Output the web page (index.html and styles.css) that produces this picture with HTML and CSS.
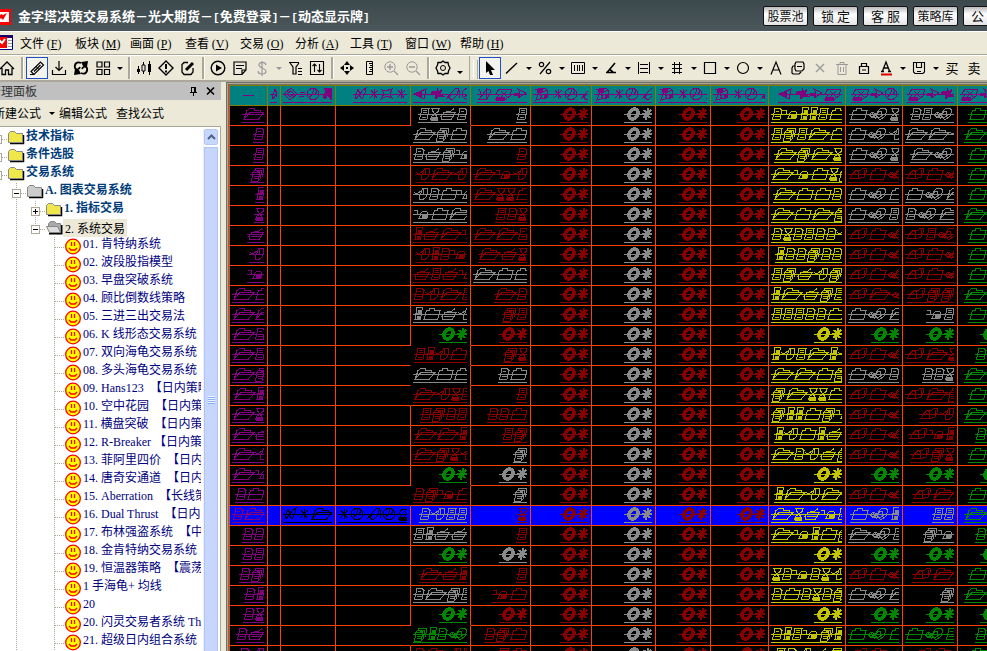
FILE: index.html
```html
<!DOCTYPE html>
<html lang="zh-CN">
<head>
<meta charset="utf-8">
<title>金字塔决策交易系统</title>
<link rel="stylesheet" href="styles.css">
</head>
<body>
<header class="titlebar">
  <svg class="logo" viewBox="0 0 16 16"><path fill="#f00" d="M0 0h16v16H0z"/><path fill="#fff" d="M2 3h12v10H2z"/><path d="M2 10l4-5 2 1 4-2-4 7-2-2-2 2z" fill="#f00"/></svg>
  <h1>金字塔决策交易系统－光大期货－<span class="mono">[</span>免费登录<span class="mono">]</span>－<span class="mono">[</span>动态显示牌<span class="mono">]</span></h1>
  <div class="title-actions">
    <button>股票池</button><button class="wide">锁 定</button><button class="wide">客 服</button><button>策略库</button><button class="wide">公 告</button>
  </div>
</header>
<nav class="menubar">
  <svg class="doc-logo" viewBox="0 0 18 16"><path fill="#fff" stroke="#000080" d="M.5.5h16v14H.5z"/><path fill="#1a006a" d="M1 0h16v3H1z"/><path fill="#f00" d="M0 2h11v11H0z"/><path stroke="#fff" stroke-width="2" d="M1 10l3-4 2 2 3-4"/><path stroke="#999" d="M12 5.500h4M12 8.500h4M12 11.500h4"/></svg>
  <a href="#">文件 <span class="key">(<u>F</u>)</span></a>
  <a href="#">板块 <span class="key">(<u>M</u>)</span></a>
  <a href="#">画面 <span class="key">(<u>P</u>)</span></a>
  <a href="#">查看 <span class="key">(<u>V</u>)</span></a>
  <a href="#">交易 <span class="key">(<u>O</u>)</span></a>
  <a href="#">分析 <span class="key">(<u>A</u>)</span></a>
  <a href="#">工具 <span class="key">(<u>T</u>)</span></a>
  <a href="#">窗口 <span class="key">(<u>W</u>)</span></a>
  <a href="#">帮助 <span class="key">(<u>H</u>)</span></a>
</nav>
<div class="toolbar" id="toolbar"></div>
<main class="workspace">
  <aside class="panel">
    <div class="panel-title"><span>管理面板</span>
      <button aria-label="固定"><svg viewBox="0 0 9 10"><path d="M2.500 1v5M2 1.500h4M5.500 1v5M6.500 1v5M1 6.500h7M4.500 7v3" fill="none" stroke="#000"/></svg></button>
      <button aria-label="关闭"><svg viewBox="0 0 9 10"><path d="M1 1.500l7 7M8 1.500l-7 7" stroke="#000" stroke-width="1.600"/></svg></button>
    </div>
    <div class="panel-tools"><a href="#">新建公式</a><i class="caret"></i><a href="#">编辑公式</a><a href="#">查找公式</a></div>
    <div class="tree-box">
      <ul class="tree" id="tree"></ul>
      <div class="scroll"><button aria-label="向上"><svg viewBox="0 0 9 6"><path d="M1 5l3.500-3.500L8 5" fill="none" stroke="#4d6185" stroke-width="2"/></svg></button><div class="thumb"><i></i></div></div>
    </div>
  </aside>
  <section class="board"><div class="board-inner"><table id="quotes"></table></div></section>
</main>
<script src="app.js"></script>
</body>
</html>
```
FILE: styles.css
```css
* { box-sizing: border-box; }
body {
  margin: 0;
  height: 100vh;
  display: flex;
  flex-direction: column;
  overflow: hidden;
  background: #ece9d8;
  color: #000;
  font: 12px/16px "Noto Sans CJK SC", sans-serif;
}
a { color: inherit; text-decoration: none; }
button { font: inherit; padding: 0; margin: 0; border: 0; background: none; color: inherit; }
svg { display: block; overflow: visible; flex: none; }
.key, .latin { font-family: "Liberation Serif", serif; }
.key { font-size: 12px; }

.titlebar {
  flex: none;
  height: 31px;
  display: flex;
  align-items: center;
  overflow: hidden;
  background: linear-gradient(#3b484c, #4b575b);
  color: #fff;
}
.logo { width: 16px; height: 16px; margin: 2px 7px 0 -5px; }
h1 { margin: 3px 0 0; font-size: 13px; line-height: 16px; font-weight: 700; white-space: nowrap; }
h1 .mono { font-family: "Liberation Mono", monospace; font-size: 11px; }
.title-actions { display: flex; gap: 5px; margin: 1px -21px 0 auto; flex: none; }
.title-actions button {
  width: 45px;
  height: 20px;
  border: 1px solid #111;
  border-radius: 2px;
  background: linear-gradient(#bbb, #fff 40%, #e4e4e4);
  color: #111;
  line-height: 18px;
  white-space: nowrap;
}
.title-actions .wide { font-size: 13px; }

.menubar {
  flex: none;
  height: 24px;
  display: flex;
  align-items: center;
  border-top: 1px solid #fff;
  border-bottom: 1px solid #aca899;
}
.menubar a { width: 55px; white-space: nowrap; }
.doc-logo { width: 18px; height: 16px; margin: 0 6px 0 -4px; }

.toolbar {
  flex: none;
  height: 27px;
  display: flex;
  align-items: center;
  overflow: hidden;
  border-top: 1px solid #fff;
  border-bottom: 2px solid #aca899;
}
.tool { flex: none; width: 22px; height: 22px; display: grid; place-items: center; font-size: 13px; }
.tool:first-child { margin-left: -4px; }
.tool.on { border: 1px solid #1c51c4; background: #f4f3ee; }
.tool.dim { color: #999; }
.tool svg { width: 16px; height: 16px; fill: none; stroke: currentColor; }
.drop { flex: none; width: 11px; height: 22px; display: grid; place-items: center; }
.caret, .drop i { border: 3px solid transparent; border-top-color: #000; border-bottom: 0; }
.drop.dim i { border-top-color: #999; }
.drop.low { padding-top: 8px; }
.sep { flex: none; width: 8px; height: 22px; border-left: 3px solid transparent; }
.sep::before { content: ""; display: block; width: 2px; height: 100%; background: #aca899; border-right: 1px solid #fff; }
.grip { flex: none; width: 14px; height: 27px; border-left: 1px solid #aca899; margin-left: 4px; margin-right: -4px; padding: 5px 0 3px 3px; }
.grip::before { content: ""; display: block; width: 3px; height: 19px; border-right: 1px solid #aca899; border-left: 1px solid #fff; }

.workspace { flex: 1; min-height: 0; display: flex; }
.panel { flex: none; width: 221px; display: flex; flex-direction: column; overflow: hidden; }
.panel-title { flex: none; height: 18px; display: flex; align-items: center; gap: 8px; background: #c0c0c0; padding-right: 6px; }
.panel-title span { margin-left: -11px; margin-right: auto; color: #333; }
.panel-title svg { width: 9px; height: 10px; }
.panel-tools { flex: none; height: 27px; display: flex; align-items: center; gap: 9px; border-bottom: 1px solid #aca899; }
.panel-tools a { white-space: nowrap; }
.panel-tools a:first-child { margin-left: -7px; }
.panel-tools .caret { margin: 0 -5px 0 -1px; }
.tree-box { flex: 1; min-height: 0; display: flex; background: #fff; border-right: 1px solid #aca899; padding-top: 2px; }
.tree { flex: 1; min-width: 0; margin: 0 2px 0 0; padding: 0; list-style: none; overflow: hidden; }
.tree li { height: 18px; display: flex; margin-left: -12px; color: #000080; white-space: nowrap; line-height: 12px; }
.tree li > svg { width: 17px; height: 18px; margin: 0 0 0 1px; }
.tree .label { padding-left: 1px; }
.tree .latin { margin-right: 3px; }
.tree .bold { font-weight: 700; color: #003c78; }
.tree .sel { color: #000; }
.tree .sel .label { background: #ece9d8; line-height: 18px; padding: 0 2px; }
.guide { flex: none; position: relative; width: 19px; height: 18px; }
.guide.line { background: repeating-linear-gradient(#aca899 0 1px, transparent 1px 2px) 9px 0 / 1px 100% no-repeat; }
.guide.end { background-size: 1px 10px; }
.guide.branch::after { content: ""; position: absolute; left: 10px; right: 0; top: 10px; border-top: 1px dotted #aca899; }
.guide b { position: absolute; z-index: 1; left: 5px; top: 6px; width: 9px; height: 9px; border: 1px solid #aca899; background: #fff; }
.guide b::before { content: ""; position: absolute; left: 1px; top: 3px; width: 5px; height: 1px; background: #000; }
.guide b.plus::after { content: ""; position: absolute; left: 3px; top: 1px; width: 1px; height: 5px; background: #000; }
.scroll { flex: none; width: 17px; border-left: 1px solid #eef; border-right: 2px solid #fff; display: flex; flex-direction: column; }
.scroll button { height: 16px; display: grid; place-items: center; border: 1px solid #b5c8f5; border-radius: 2px; background: #c6d6fd; }
.scroll svg { width: 9px; height: 6px; }
.thumb { flex: 1; margin-top: 2px; border: 1px solid #b0c4f5; border-bottom: 0; background: #c6d6fd; display: grid; place-items: center; }
.thumb i { width: 7px; height: 8px; background: repeating-linear-gradient(#eef4fe 0 1px, #8cb0f8 1px 2px); }

.board { flex: 1; min-width: 0; margin-left: 5px; border: solid #716f64; border-width: 1px 0 0 1px; background: #aca899; padding: 1px 0 0 1px; }
.board-inner { height: 100%; overflow: hidden; background: #000; border: solid #716f64; border-width: 1px 0 0 1px; }
#quotes { table-layout: fixed; width: 0; border-collapse: separate; border-spacing: 0; border-left: 1px solid #ff4000; }
#quotes td, #quotes th { height: 20px; padding: 0; border: solid #ff4000; border-width: 0 1px 1px 0; }
#quotes th { height: 21px; background: #008080; border-color: #808000; border-top-width: 1px; }
#quotes .picked td { background: #00f; }
#quotes td.open-right { border-right-color: #000; }
#quotes td.open-bottom { border-bottom-color: #000; }
.clip { display: flex; height: 19px; margin: 0 3px 0 2px; overflow: hidden; }
.clip svg { height: 18px; margin-left: auto; fill: none; stroke: currentColor; shape-rendering: crispEdges; }
.red { color: #860000; }
.gray { color: #8a8a8a; }
.purple { color: #800080; }
.yellow { color: #c4c400; }
.green { color: #008600; }
.black { color: #000; }
```
FILE: app.js
```js
// Pictograms used by the quote board: advance width and strokes.
const PIC = {
  '0': [18, '<path d="M2 13.500L4.500 4.500H7L8 2.500H12.500V4.500H18L15.500 13.500Z"/>'],
  '1': [22, '<path d="M2 13.500L5 4.500L8 2.500H12L13 4.500H18.500L18 6.500M2 13.500L8 6.500H22L16 13.500Z"/>'],
  '2': [11, '<path d="M1.500 13.500L4 2.500H9L11 4.500L9 13.500ZM5 5.500H8M4 8.500H9M4 10.500H9"/>'],
  '3': [11, '<path d="M1.500 13.500L4 2.500H11L9 13.500ZM5 4.500H9M5 6.500H9M4 8.500H9M4 11.500H8"/>'],
  '4': [14, '<path d="M1.500 15.500L3 6.500H10L8 15.500ZM3.500 6L4.500 4.500H12L10 13.500H8M5.500 4L6 2.500H14L12 11.500M5 8.500H8M4 10.500H9M4 12.500H9M7 5.500H10"/>'],
  '5': [9, '<path d="M2 13.500L4 1.500H9.500L7.500 13.500ZM3 7.500H8M5 4.500H8M5 10.500H7"/><path d="M5 4h2v2H5zM4 10h2v2H4z" fill="currentColor"/>'],
  '6': [10, '<path d="M3 2.500H10L9 5.500L6 8L8 11L7.500 13.500H1.500L3 10L6 8L4 5.500Z"/><path d="M2 11h6v3H2z" fill="currentColor"/>'],
  '7': [17, '<path d="M2 10.500L5 6.500H16L14 10.500L12 13.500H3ZM7 6L12 5L15 2.500M4 8.500H14M4 10.500H13"/>'],
  '8': [15, '<path d="M1 6.500L4 8L8 5L10 2.500H14L15 5L13 11L10 13.500H7L6 11L9 5M11 3L10 8"/>'],
  '9': [17, '<path d="M1 4.500H4V8.500H7L9 6L13 5L15 7L14 12.500H6L8 8"/><path d="M9 8h4v4H9z" fill="currentColor"/>'],
  '.': [22, '<path d="M2 9L5 6L9 8L13 3L17 2L20 4L18 10L13 14L9 10M2 9L6 12L10 11L13 14M5 6L9 13M12 5L15 6L14 10M8 8L12 12L16 9M4 11L9 9L12 6"/>'],
  '-': [20, '<path d="M2 12.500L6 6L9 4H13L15 2H18L19 5L16 11L12 12.500ZM9 4L11 7L10 12M6 6L8 8M16 4V9"/>'],
  'x': [28, '<ellipse cx="9.500" cy="8" rx="4.200" ry="5.200" transform="rotate(35 9.500 8)" stroke-width="3.600"/><path d="M19 12L27 4M20 4L26 12M18 8H28M24 2L22 14" stroke-width="2"/>'],
  'a': [16, '<path d="M1 8L8 2L14 8L7 14ZM4 8L8 5L11 8L7 11Z"/>'],
  'b': [7, '<path d="M1 6h5M0 10h5"/>'],
  'c': [15, '<ellipse cx="7" cy="8" rx="6" ry="5.500"/><path d="M8 3L6 9L3 11M11 4L9 9"/>'],
  'd': [14, '<path d="M3 2H12L11 5L14 12L10 14L7 9L4 13L2 10L5 6Z" fill="currentColor"/>'],
  'e': [15, '<path d="M2 11L5 3L7 8L10 4L13 2L12 7L9 13L6 9L3 13Z"/>'],
  'f': [15, '<path d="M2 4L5 5L12 3L10 8L12 12L7 10L1 13L4 8Z"/>'],
  'g': [17, '<path d="M1 8L13 3L11 13ZM5 8L9 6"/><path d="M2 8L9 5L8 11Z" fill="currentColor"/>'],
  'h': [17, '<path d="M2 3L5 10L8 5L12 3L14 5L10 13H2L6 8M9 2V14"/>'],
  'i': [19, '<path d="M2 8L5 3H18L16 10L12 13H2L5 9ZM7 5L13 11M13 5L7 11"/><path d="M4 11H10V14H3Z" fill="currentColor"/>'],
  'j': [14, '<path d="M1 8L7 7L5 3L13 7L5 12L7 9H1"/>'],
  'k': [19, '<path d="M2 3H6L5 8L9 10L7 13L3 14L5 8M5 3L12 2L15 5L13 12L9 13L7 7L14 4"/><path d="M4 3h5v3H4zM11 8h3v3h-3z" fill="currentColor"/>'],
  's': [12, '<path d="M2 12L10 4M3 4L9 12M1 8H11M6 3V13"/>'],
  'l': [17, '<path d="M2 13L9 5L12 2H15L13 9L8 14L4 11L9 8M15 4L16 12"/>'],
  'm': [14, '<path d="M3 5L7 6V2L9 6L12 3L10 8L13 10L9 10L6 13L5 9L1 8Z" fill="currentColor"/>']
};
const NS = 'xmlns="http://www.w3.org/2000/svg"';

function glyphs(text) {
  let x = 0, body = '';
  for (const ch of text) {
    body += `<g transform="translate(${x} 0)">${PIC[ch][1]}</g>`;
    x += PIC[ch][0];
  }
  return `<svg ${NS} width="${x}" height="18">${body}<path d="M0 8.500H${x}M0 16.500H${x}"/></svg>`;
}
const cell = (text, color) => `<div class="clip ${color}">${text ? glyphs(text) : ''}</div>`;

const widths = [38, 13, 55, 75, 60, 60, 61, 64, 55, 58, 77, 57, 55, 54];
const heads = ['', 'e', 'abcd', 'esfs', 'gmlc', 'hij', 'kscl', 'kscl', 'kscl', 'kscl', 'gmji', 'ijc', 'ijm', 'ijc'];
// last price, volume, total, change, percent, bid; an initial letter sets the colour
const rows = [
  'g3672 g3 295530 g0.6 g23. 0.', 'g140 g10 34310 g0.8 g118 1.', 'g2749 r2 1416 g0.6 g1. 0.',
  'r818 r198 19064 r-0. r-0. 0.', 'g8209 r1660 1002 g0.0 g0.1 0.', 'g901 r326 1014 g0.3 g2.1 1.',
  'r5719 r112 2623228 r-0. r-3. 0.', 'r8529 r176 522422 r-0. r-0. 0.', 'r7379 g100 34784 r-0. r-0. 0.',
  'r2813 r12 51743 r-1. r-44 1.', 'g5078 r43 333220 g0.1 g93 0.', 'nx rx x nx nx x',
  'r3580 r46 583158 r-0. r-16 2.', 'g100 g20 1104 g0.2 g226 1.', 'r1862 r3 41660 r-0. r-14 0.',
  'r3423 r220 455049 r-0. r-8 1.', 'r115 r34 58057 r-0. r-95 2.', 'r1468 g4 12874 r-0. r-46 0.',
  'nx gx x nx nx x', 'r2490 g4 5181 r-0. r-1 0.', 'g2833 r6 16792 g0.5 g33 1.',
  'g3577 r3 19504 g1.2 g49 2.', 'nx gx x nx nx x', 'r175 r3 629268 r-0. r-1 0.',
  'g2143 r90 202624 g0.1 g4 1.', 'nx rx x nx nx x', 'n452. r240 253945 n0.0 n0.2 2.', 'r2183 r40 32874 r-0. r-1 0.'
];
const COLOR = { g: 'gray', r: 'red', n: 'green' };
const openRows = [0, 11, 12, 13, 18, 25];

let html = '<colgroup>' + widths.map(w => `<col style="width:${w}px">`).join('') + '</colgroup><tr>';
heads.forEach((h, i) => {
  html += '<th>' + (i ? cell(h, 'purple') : '<div class="clip purple"><svg width="33"><path d="M11 9.500h11"/></svg></div>') + '</th>';
});
html += '</tr>';
rows.forEach((row, n) => {
  const picked = n === 20;
  const [p, v, t, c, d, b] = row.split(' ');
  const tinted = s => cell(s.slice(1), COLOR[s[0]]);
  html += `<tr${picked ? ' class="picked"' : ''}>` +
    `<td>${cell(String(n + 1), 'purple')}</td><td></td>` +
    `<td>${picked ? cell('es10', 'black') : ''}</td>` +
    `<td${openRows.includes(n - 1) ? ' class="open-right"' : ''}>${picked ? cell('sclci', 'black') : ''}</td>` +
    `<td${openRows.includes(n) ? ' class="open-bottom"' : ''}>${tinted(p)}</td><td>${tinted(v)}</td>` +
    ['red', 'gray', 'red', 'red'].map(k => `<td>${cell('x', k)}</td>`).join('') +
    `<td>${cell(t, 'yellow')}</td><td>${tinted(c)}</td><td>${tinted(d)}</td><td>${cell(b, 'green')}</td></tr>`;
});
document.getElementById('quotes').innerHTML = html;

// Toolbar
const P = (d, w) => `<path d="${d}"${w ? ` stroke-width="${w}"` : ''}/>`;
const F = d => `<path d="${d}" fill="currentColor" stroke="none"/>`;
const ICON = {
  home: P('M1 9L8 2L15 9M3 8V14.500H6.500V10H9.500V14.500H13V8', 1.3),
  pen: P('M2 11.500L11.500 2L14.500 5L5 14.500ZM5 11.500L11.500 5', 1.2) + P('M1 14.500H5M7 6.500L10 9.500'),
  down: P('M8 1V10M4.500 7L8 10.500L11.500 7M1.500 10V14.500H14.500V10', 1.2),
  sync: P('M8 3C4 1 1 4 2 8C3 10 6 10 7 7M8 13C12 15 15 12 14 8C13 6 10 6 9 9', 1.800) + F('M8 2L15 1L14 7L10 6zM1 15L2 9L6 10L8 14z'),
  grid: P('M2 2H7V7H2ZM9.500 2H14.500V7H9.500ZM2 9.500H7V14.500H2ZM9.500 9.500H14.500V14.500H9.500Z', 1.2),
  candle: P('M2.500 6V14M7.500 2V14M13.500 1V15') + F('M1 9h3v3H1zM12 4h3v8h-3z') + '<path d="M6 5h3v6H6z" fill="#ece9d8"/>',
  warn: P('M8 1L15 8L8 15L1 8Z', 1.4) + P('M8 4V9M8 10.500V12.500', 2),
  edit: P('M8 2.500H4L2 4.500V12L4 14.500H11L13 12V8', 1.3) + P('M6 10L13 3', 3),
  play: '<circle cx="8" cy="8" r="6.800" stroke-width="1.400"/>' + F('M6 4.500L12 8L6 11.500z'),
  note: P('M2 2H14V10L10 14.500H2ZM14 10H10V14M4 5.500H12M4 8.500H10', 1.2),
  dollar: P('M12 5C11 1 4 2 5 5.500C6 8 11 8 12 11C12 15 4 15 4 11M8 1V16', 1.2),
  filter: P('M2 2.500H12M3 3L6 7V14H9V7L12 3M11 8.500H15M11 11.500H15M11 14.500H15', 1.2),
  updown: P('M1.500 1.500H14.500V14.500H1.500ZM5.500 12V4M3.500 6L5.500 4L7.500 6M10.500 4V12M8.500 10L10.500 12L12.500 10', 1.1),
  move: F('M8 1l3 4H5zM8 15l3-4H5zM1 8l4-3v6zM15 8l-4-3v6zM7 7h2v2H7z'),
  ruler: P('M5.500 1.500H11.500V14.500H5.500ZM8 3.500H11M9 5.500H11M8 7.500H11M9 9.500H11M8 11.500H11'),
  plus: '<circle cx="7" cy="7" r="5.200"/>' + P('M11 11L15 15M4 7H10M7 4V10', 1.3),
  minus: '<circle cx="7" cy="7" r="5.200"/>' + P('M11 11L15 15M4 7H10', 1.3),
  gear: P('M4 2.500H6L8 1L10 2.500H13L13.500 5L15 8L13.500 11L13 13.500H10L8 15L6 13.500H3L2.500 11L1 8L2.500 5L3 2.500Z', 1.3) + '<circle cx="8" cy="8" r="2.500"/>',
  arrow: F('M4 1L13 10H9L11 15H8L6.500 11L4 13z'),
  line: P('M2 13.500L13 3', 1.4),
  pct: P('M13 2L3 14', 1.2) + '<circle cx="4.500" cy="4.500" r="2.200" stroke-width="1.200"/><circle cx="11.500" cy="11.500" r="2.200" stroke-width="1.200"/>',
  bars: P('M1.500 2.500H14.500V13.500H1.500ZM4.500 5V11M7.500 5V11M9.500 5V11M12.500 5V11'),
  angle: P('M12 3L4 12.500M3 12.500H13M6 9L10 12', 1.6),
  levels: P('M2.500 2V14M13.500 2V14M4 4.500H12M4 8.500H12M4 12.500H12'),
  hash: P('M5.500 2V14M10.500 2V14M3 4.500H13M3 8.500H13M3 12.500H13'),
  square: P('M2.500 2.500H13.500V13.500H2.500Z', 1.2),
  circle: '<circle cx="8" cy="8" r="5.500" stroke-width="1.200"/>',
  letter: P('M3 14.500L8 2L13 14.500M5 10H11', 1.2),
  copy: P('M6 2H13L14 4V9L12 11H6L5 9V4ZM5 6H3L2 8V13L3 14H9L11 12M7 6.500H12', 1.2),
  cross: P('M4 4L12 12M12 4L4 12', 1.4),
  trash: P('M2 4.500H14M6 4V2.500H10V4M4 5V14.500H12V5M6.500 7V12M9.500 7V12'),
  lock: P('M3.500 6.500H12.500V13.500H3.500ZM5.500 6V3.500H10.500V6M6 10H10', 1.2),
  color: P('M4.500 11L8 2L11.500 11M6 8H10M3 11.500H6M10 11.500H13', 1.3) + '<path d="M3 14.500H14" stroke="#e00000" stroke-width="2"/>',
  save: P('M2.500 2.500H13.500V12L12 13.500H4L2.500 12ZM5.500 3V7.500H10.500V3M6 11.500H10', 1.1)
};
const tools = 'home | *pen down sync grid v | candle warn edit | play note -dollar w filter updown | move ruler -plus -minus | gear u # *arrow line v pct v bars v angle v levels v hash v square v circle v letter copy -cross -trash lock color v save v 买 卖'.split(' ');
document.getElementById('toolbar').innerHTML = tools.map(t => {
  if (t === '|') return '<span class="sep"></span>';
  if (t === '#') return '<span class="grip"></span>';
  if (t === 'v' || t === 'w' || t === 'u') return `<span class="drop${t === 'w' ? ' dim' : t === 'u' ? ' low' : ''}"><i></i></span>`;
  const cls = t[0] === '*' ? ' on' : t[0] === '-' ? ' dim' : '';
  const name = t.replace(/^[*-]/, '');
  return `<button class="tool${cls}" aria-label="${name}">${ICON[name] ? `<svg viewBox="0 0 16 16">${ICON[name]}</svg>` : name}</button>`;
}).join('');

// Formula tree: level and label
const FOLDER = '<svg viewBox="0 0 17 18"><path d="M2 14.500H15.500V6" fill="none" stroke="#000" stroke-width="1.500"/><path d="M.500 13.500V4.500L2.500 2.500H6.500L8.500 4.500H14.500V13.500Z" fill="COLOR" stroke="#888"/></svg>';
const OPENED = '<svg viewBox="0 0 17 18"><path d="M3 14.500H15.500V6" fill="none" stroke="#000" stroke-width="2"/><path d="M2.500 7V4.500L4.500 2.500H8.500L10.500 4.500H14.500V13" fill="#aaa" stroke="#888"/><path d="M.500 7.500H11.500L14.500 13.500H3.500Z" fill="#ddd" stroke="#888"/></svg>';
const SMILE = '<svg viewBox="0 0 17 18"><circle cx="8" cy="9.500" r="7.300" fill="#ff0" stroke="#f00" stroke-width="1.300"/><path d="M6.500 5V9M9.500 5V9M4 11L6 13H10L12 11" fill="none" stroke="#f00" stroke-width="1.300"/></svg>';
const tree = [
  [0, '技术指标'], [0, '条件选股'], [0, '交易系统'], [1, 'A.图表交易系统'], [2, '1.指标交易'], [2, '2.系统交易'],
  ...['01.肯特纳系统', '02.波段股指模型', '03.早盘突破系统', '04.顾比倒数线策略', '05.三进三出交易法', '06.K线形态交易系统',
    '07.双向海龟交易系统', '08.多头海龟交易系统', '09.Hans123 【日内策略】', '10.空中花园 【日内策略】', '11.横盘突破 【日内策略】',
    '12.R-Breaker【日内策略】', '13.菲阿里四价 【日内策略】', '14.唐奇安通道 【日内策略】', '15.Aberration 【长线策略】',
    '16.Dual Thrust 【日内策略】', '17.布林强盗系统 【中线策略】', '18.金肯特纳交易系统', '19.恒温器策略 【震荡策略】',
    '1手海龟+均线', '20', '20.闪灵交易者系统 The', '21.超级日内组合系统'].map(s => [3, s])
];
document.getElementById('tree').innerHTML = tree.map(([level, text], i) => {
  let g = '';
  for (let k = 0; k < level; k++) g += `<span class="guide${k === 1 ? ' line' : ''}"></span>`;
  const box = level < 3 ? `<b class="${level === 2 && i === 4 ? 'plus' : ''}"></b>` : '';
  g += `<span class="guide branch${level ? ' line' : ''}${i === 5 ? ' end' : ''}">${box}</span>`;
  const icon = level === 3 ? SMILE : i === 5 ? OPENED : FOLDER.replace('COLOR', i === 3 ? '#ccc' : '#f0e84a');
  const label = text.replace(/\d+\.|[\x20-\x7e]+/g, m => `<span class="latin">${m}</span>`);
  return `<li class="${i === 5 ? 'sel' : level < 3 ? 'bold' : ''}">${g}${icon}<span class="label">${label}</span></li>`;
}).join('');
```
